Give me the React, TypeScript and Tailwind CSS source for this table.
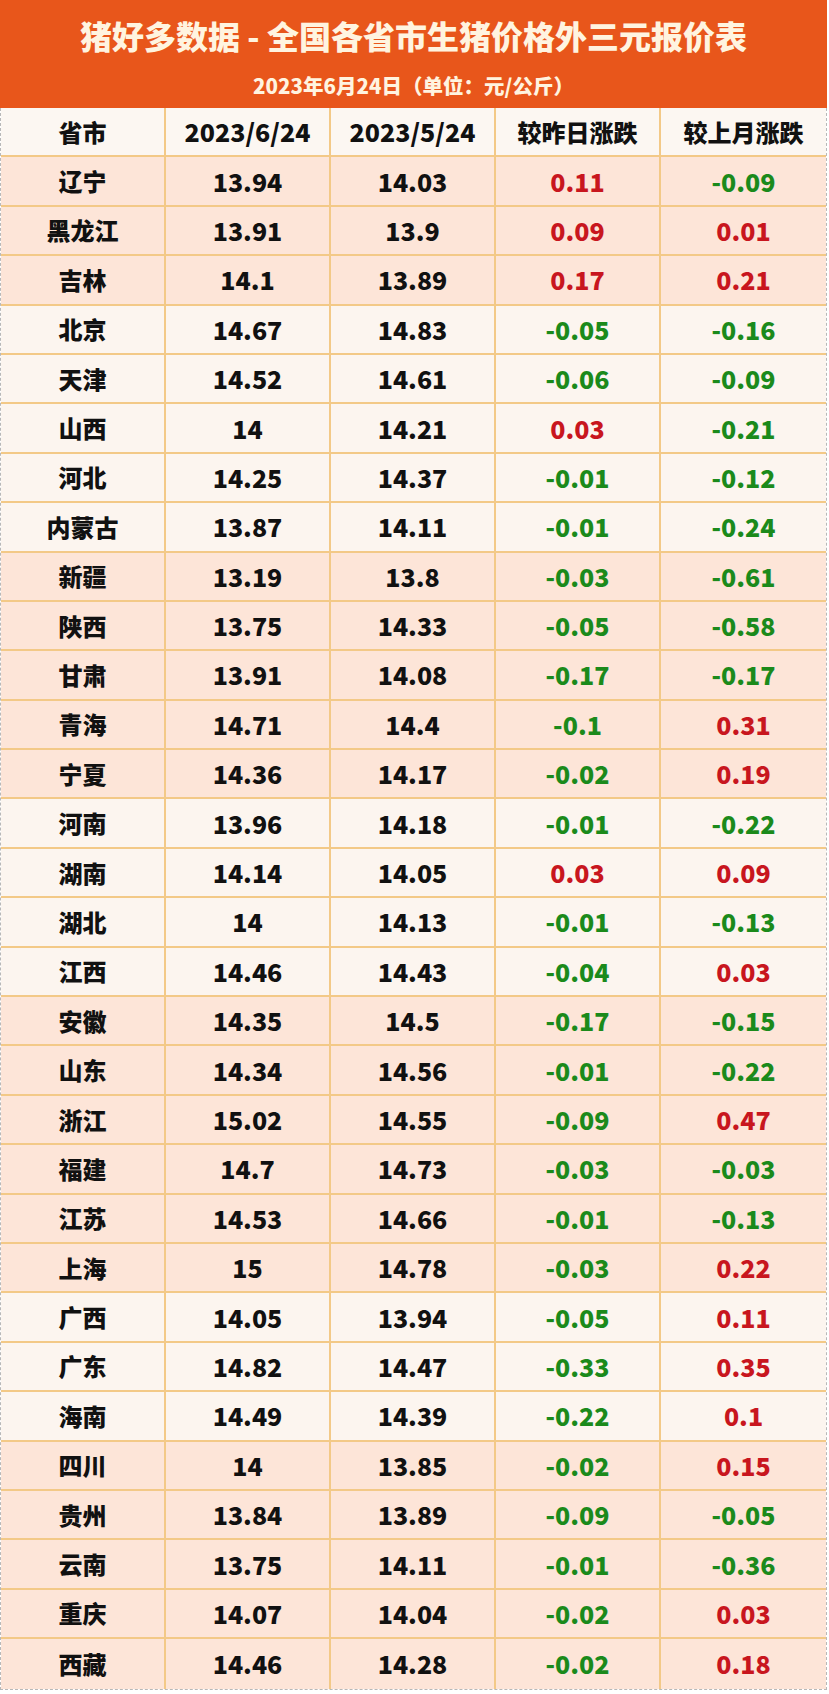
type Row = [string, string, string, string, string, boolean];

// [province, 6/24, 5/24, vs yesterday, vs last month, shaded]
const rows: Row[] = [
  ["辽宁", "13.94", "14.03", "0.11", "-0.09", true],
  ["黑龙江", "13.91", "13.9", "0.09", "0.01", true],
  ["吉林", "14.1", "13.89", "0.17", "0.21", true],
  ["北京", "14.67", "14.83", "-0.05", "-0.16", false],
  ["天津", "14.52", "14.61", "-0.06", "-0.09", false],
  ["山西", "14", "14.21", "0.03", "-0.21", false],
  ["河北", "14.25", "14.37", "-0.01", "-0.12", false],
  ["内蒙古", "13.87", "14.11", "-0.01", "-0.24", false],
  ["新疆", "13.19", "13.8", "-0.03", "-0.61", true],
  ["陕西", "13.75", "14.33", "-0.05", "-0.58", true],
  ["甘肃", "13.91", "14.08", "-0.17", "-0.17", true],
  ["青海", "14.71", "14.4", "-0.1", "0.31", true],
  ["宁夏", "14.36", "14.17", "-0.02", "0.19", true],
  ["河南", "13.96", "14.18", "-0.01", "-0.22", false],
  ["湖南", "14.14", "14.05", "0.03", "0.09", false],
  ["湖北", "14", "14.13", "-0.01", "-0.13", false],
  ["江西", "14.46", "14.43", "-0.04", "0.03", false],
  ["安徽", "14.35", "14.5", "-0.17", "-0.15", true],
  ["山东", "14.34", "14.56", "-0.01", "-0.22", true],
  ["浙江", "15.02", "14.55", "-0.09", "0.47", true],
  ["福建", "14.7", "14.73", "-0.03", "-0.03", true],
  ["江苏", "14.53", "14.66", "-0.01", "-0.13", true],
  ["上海", "15", "14.78", "-0.03", "0.22", true],
  ["广西", "14.05", "13.94", "-0.05", "0.11", false],
  ["广东", "14.82", "14.47", "-0.33", "0.35", false],
  ["海南", "14.49", "14.39", "-0.22", "0.1", false],
  ["四川", "14", "13.85", "-0.02", "0.15", true],
  ["贵州", "13.84", "13.89", "-0.09", "-0.05", true],
  ["云南", "13.75", "14.11", "-0.01", "-0.36", true],
  ["重庆", "14.07", "14.04", "-0.02", "0.03", true],
  ["西藏", "14.46", "14.28", "-0.02", "0.18", true],
];

const font = "font-['Noto_Sans_CJK_SC','Noto_Sans',sans-serif]";

function Cell({ children, last, className = "" }: { children: React.ReactNode; last?: boolean; className?: string }) {
  return (
    <div
      className={`flex items-center justify-center ${last ? "" : "border-r-2 border-[#f3c987]"} ${className}`}
    >
      {children}
    </div>
  );
}

function changeColor(v: string) {
  return v.startsWith("-") ? "text-[#1b8a1b]" : "text-[#c8161e]";
}

export default function App() {
  return (
    <div className={`w-[829px] bg-white ${font} font-black`}>
      <div className="w-[827px]">
        <div className="flex h-[108px] flex-col items-center bg-[#e8561b] text-[#fff4e0]">
          <div className="mt-[14px] text-[32px] leading-[42px]">
            猪好多数据 - 全国各省市生猪价格外三元报价表
          </div>
          <div className="mt-[15px] text-[20.5px] leading-[28px]">2023年6月24日（单位：元/公斤）</div>
        </div>

        <div className="border-x border-b border-dashed border-[#b8b8b8]">
          <div className="grid h-[49.4px] grid-cols-5 border-b-2 border-[#f3c987] bg-[#fcf7f2] text-[25px] leading-none text-[#111]">
            <Cell className="text-[24px]">省市</Cell>
            <Cell>2023/6/24</Cell>
            <Cell>2023/5/24</Cell>
            <Cell className="text-[24px]">较昨日涨跌</Cell>
            <Cell last className="text-[24px]">较上月涨跌</Cell>
          </div>

          {rows.map(([name, a, b, d, m, shaded], i) => (
            <div
              key={name}
              className={`grid h-[49.4px] grid-cols-5 text-[25px] leading-none ${
                i === rows.length - 1 ? "" : "border-b-2 border-[#f3c987]"
              } ${shaded ? "bg-[#fde5d8]" : "bg-[#fcf5ef]"}`}
            >
              <Cell className="text-[24px] text-[#111]">{name}</Cell>
              <Cell className="text-[#111]">{a}</Cell>
              <Cell className="text-[#111]">{b}</Cell>
              <Cell className={changeColor(d)}>{d}</Cell>
              <Cell last className={changeColor(m)}>
                {m}
              </Cell>
            </div>
          ))}
        </div>
      </div>
    </div>
  );
}
